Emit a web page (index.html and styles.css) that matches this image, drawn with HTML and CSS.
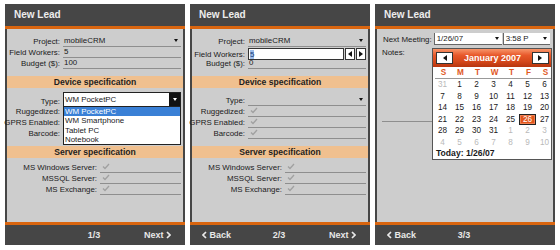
FILE: index.html
```html
<!DOCTYPE html>
<html lang="en">
<head>
  <meta charset="UTF-8">
  <title>New Lead</title>
  <link rel="stylesheet" href="styles.css">
</head>
<body>
  <div class="screens">

    <!-- Paso 1: tipo de dispositivo abierto -->
    <div class="phone">
      <div class="title">New Lead</div>
      <div class="body">
        <div class="row tall"><span class="lbl">Project:</span><span class="val">mobileCRM<i class="drop"></i></span></div>
        <div class="row"><span class="lbl">Field Workers:</span><span class="val">5</span></div>
        <div class="row"><span class="lbl">Budget ($):</span><span class="val">100</span></div>
        <div class="section">Device specification</div>
        <div class="row tall"><span class="lbl">Type:</span>
          <span class="val box">WM PocketPC<b class="btn"><i class="drop white"></i></b>
            <span class="list">
              <span class="item on">WM PocketPC</span>
              <span class="item">WM Smartphone</span>
              <span class="item">Tablet PC</span>
              <span class="item">Notebook</span>
            </span>
          </span>
        </div>
        <div class="row"><span class="lbl">Ruggedized:</span><span class="val"></span></div>
        <div class="row"><span class="lbl">GPRS Enabled:</span><span class="val"></span></div>
        <div class="row"><span class="lbl">Barcode:</span><span class="val"></span></div>
        <div class="section">Server specification</div>
        <div class="row wide"><span class="lbl">MS Windows Server:</span><span class="val"><svg class="check" viewBox="0 0 8 7"><polyline points="1,3.5 3,5.5 7,1"/></svg></span></div>
        <div class="row wide"><span class="lbl">MSSQL Server:</span><span class="val"><svg class="check" viewBox="0 0 8 7"><polyline points="1,3.5 3,5.5 7,1"/></svg></span></div>
        <div class="row wide"><span class="lbl">MS Exchange:</span><span class="val"><svg class="check" viewBox="0 0 8 7"><polyline points="1,3.5 3,5.5 7,1"/></svg></span></div>
      </div>
      <div class="foot">
        <span></span>
        <span class="page">1/3</span>
        <span class="next">Next <svg class="chev" viewBox="0 0 5 8"><polyline points="1,1 4,4 1,7"/></svg></span>
      </div>
    </div>

    <!-- Paso 2: editando trabajadores -->
    <div class="phone">
      <div class="title">New Lead</div>
      <div class="body">
        <div class="row tall"><span class="lbl">Project:</span><span class="val">mobileCRM<i class="drop"></i></span></div>
        <div class="row"><span class="lbl">Field Workers:</span>
          <span class="val edit"><span class="input"><span class="sel">5</span></span><b class="spin"><i class="tri left"></i></b><b class="spin"><i class="tri right"></i></b></span>
        </div>
        <div class="row"><span class="lbl">Budget ($):</span><span class="val">0</span></div>
        <div class="section">Device specification</div>
        <div class="row tall"><span class="lbl">Type:</span><span class="val"><i class="drop"></i></span></div>
        <div class="row"><span class="lbl">Ruggedized:</span><span class="val"><svg class="check" viewBox="0 0 8 7"><polyline points="1,3.5 3,5.5 7,1"/></svg></span></div>
        <div class="row"><span class="lbl">GPRS Enabled:</span><span class="val"><svg class="check" viewBox="0 0 8 7"><polyline points="1,3.5 3,5.5 7,1"/></svg></span></div>
        <div class="row"><span class="lbl">Barcode:</span><span class="val"><svg class="check" viewBox="0 0 8 7"><polyline points="1,3.5 3,5.5 7,1"/></svg></span></div>
        <div class="section">Server specification</div>
        <div class="row wide"><span class="lbl">MS Windows Server:</span><span class="val"><svg class="check" viewBox="0 0 8 7"><polyline points="1,3.5 3,5.5 7,1"/></svg></span></div>
        <div class="row wide"><span class="lbl">MSSQL Server:</span><span class="val"><svg class="check" viewBox="0 0 8 7"><polyline points="1,3.5 3,5.5 7,1"/></svg></span></div>
        <div class="row wide"><span class="lbl">MS Exchange:</span><span class="val"><svg class="check" viewBox="0 0 8 7"><polyline points="1,3.5 3,5.5 7,1"/></svg></span></div>
      </div>
      <div class="foot">
        <span class="back"><svg class="chev" viewBox="0 0 5 8"><polyline points="4,1 1,4 4,7"/></svg> Back</span>
        <span class="page">2/3</span>
        <span class="next">Next <svg class="chev" viewBox="0 0 5 8"><polyline points="1,1 4,4 1,7"/></svg></span>
      </div>
    </div>

    <!-- Paso 3: fecha de la reunion -->
    <div class="phone">
      <div class="title">New Lead</div>
      <div class="body">
        <div class="meet">
          <span class="mlbl">Next Meeting:</span>
          <span class="pick date">1/26/07<i class="drop"></i></span>
          <span class="pick time">3:58 P<i class="drop"></i></span>
        </div>
        <div class="notes-lbl">Notes:</div>
        <div class="notes"></div>

        <div class="cal">
          <div class="cal-head">
            <b class="nav"><i class="tri left"></i></b>
            <span class="month">January 2007</span>
            <b class="nav"><i class="tri right"></i></b>
          </div>
          <div class="cal-grid names">
            <span>S</span><span>M</span><span>T</span><span>W</span><span>T</span><span>F</span><span>S</span>
          </div>
          <div class="cal-grid days" id="days"></div>
          <div class="today">Today: 1/26/07</div>
        </div>
      </div>
      <div class="foot">
        <span class="back"><svg class="chev" viewBox="0 0 5 8"><polyline points="4,1 1,4 4,7"/></svg> Back</span>
        <span class="page">3/3</span>
        <span></span>
      </div>
    </div>

  </div>

  <script>
    // Dias del calendario: 31 de diciembre + enero + primeros de febrero
    const dias = document.getElementById("days");
    const lista = [{ n: 31, fuera: true }];
    for (let d = 1; d <= 31; d++) lista.push({ n: d });
    for (let d = 1; lista.length < 42; d++) lista.push({ n: d, fuera: true });

    lista.forEach(dia => {
      const span = document.createElement("span");
      span.textContent = dia.n;
      if (dia.fuera) span.className = "out";
      if (!dia.fuera && dia.n === 26) span.className = "hoy";
      dias.appendChild(span);
    });
  </script>
</body>
</html>
```

FILE: styles.css
```css
body {
  margin: 0;
  background: #fff;
  font-family: "Liberation Sans", Arial, sans-serif;
  color: #1a1a1a;
}
.screens {
  display: flex;
  gap: 5px;
  padding: 4px 5px 0;
}
.phone {
  width: 180px;
  height: 241px;
  background: #464646;
  display: flex;
  flex-direction: column;
}
.title {
  height: 22px;
  line-height: 22px;
  padding-left: 9px;
  color: #ededed;
  font-weight: bold;
  font-size: 10px;
  border-bottom: 3px solid #d9650f;
}
.body {
  flex: 1;
  margin: 0 2px;
  padding-top: 4px;
  background: #cdcdcd;
  position: relative;
}
.foot {
  height: 20px;
  border-top: 3px solid #d9650f;
  display: grid;
  grid-template-columns: 1fr auto 1fr;
  align-items: center;
  padding: 0 14px 0 12px;
  color: #e8e8e8;
  font-weight: bold;
  font-size: 9px;
}
.next {
  justify-self: end;
}
.chev {
  width: 5px;
  height: 8px;
  fill: none;
  stroke: #e8e8e8;
  stroke-width: 1.7;
  vertical-align: -1px;
}

/* filas de formulario */
.row {
  display: grid;
  grid-template-columns: 53px 1fr;
  column-gap: 3px;
  height: 11px;
  margin-right: 2px;
  font-size: 7.9px;
}
.row.tall {
  height: 14px;
}
.row.wide {
  grid-template-columns: 90px 1fr;
}
.lbl {
  display: flex;
  justify-content: flex-end;
  align-items: flex-end;
  white-space: nowrap;
  line-height: 10px;
}
.val {
  position: relative;
  display: flex;
  align-items: flex-end;
  line-height: 10px;
  padding-left: 1px;
  border-bottom: 1px solid #8e8e8e;
}
.section {
  height: 12px;
  line-height: 12px;
  margin: 7px 0 4px;
  background: #f0c08f;
  text-align: center;
  font-weight: bold;
  font-size: 8.6px;
  color: #1e1e1e;
}
.drop {
  position: absolute;
  right: 3px;
  bottom: 4px;
  border-left: 2.5px solid transparent;
  border-right: 2.5px solid transparent;
  border-top: 3px solid #111;
}
.drop.white {
  border-top-color: #fff;
  right: 3px;
  bottom: 5px;
}
.check {
  width: 8px;
  height: 7px;
  margin: 0 0 2px 1px;
  fill: none;
  stroke: #a0a0a0;
  stroke-width: 1.3;
}

/* desplegable abierto */
.val.box {
  height: 15px;
  background: #fff;
  border: 1px solid #222;
  box-sizing: border-box;
  align-items: center;
  padding-left: 1px;
}
.btn {
  position: absolute;
  top: 0;
  right: 0;
  bottom: 0;
  width: 11px;
  background: #111;
}
.list {
  position: absolute;
  top: 13px;
  left: -1px;
  right: -1px;
  background: #fff;
  border: 1px solid #222;
  z-index: 2;
}
.item {
  display: block;
  height: 9.3px;
  line-height: 9px;
  padding-left: 1px;
}
.item.on {
  background: #3a80d6;
  color: #fff;
}

/* campo numerico con flechas */
.val.edit {
  border: none;
  padding: 0;
  margin-top: 1px;
  height: 12px;
  align-items: stretch;
}
.input {
  flex: 1;
  background: #fff;
  border: 1px solid #333;
  display: flex;
  align-items: center;
  padding-left: 1px;
}
.sel {
  background: #9dbde9;
  color: #1a3f80;
  line-height: 9px;
}
.spin {
  width: 8px;
  margin-left: 1px;
  background: #fff;
  border: 1px solid #333;
  display: flex;
  align-items: center;
  justify-content: center;
}
.tri {
  border-top: 3px solid transparent;
  border-bottom: 3px solid transparent;
}
.tri.left {
  border-right: 4px solid #111;
}
.tri.right {
  border-left: 4px solid #111;
}

/* pantalla de reunion */
.meet {
  display: flex;
  align-items: center;
  height: 12px;
  padding-left: 6px;
  font-size: 7.9px;
}
.mlbl {
  margin-right: 2px;
}
.pick {
  position: relative;
  height: 12px;
  line-height: 12px;
  background: #fff;
  border-left: 1px solid #666;
  border-bottom: 1px solid #666;
  box-sizing: border-box;
  padding-left: 2px;
  overflow: hidden;
}
.pick .drop {
  bottom: 4px;
}
.date {
  width: 68px;
}
.time {
  width: 47px;
  margin-left: 1px;
}
.notes-lbl {
  margin: 3px 0 0 5px;
  line-height: 10px;
  font-size: 7.9px;
}
.notes {
  height: 63px;
  margin: 0 2px 0 5px;
  border-bottom: 1px solid #8e8e8e;
}

/* calendario */
.cal {
  position: absolute;
  left: 55px;
  top: 19px;
  width: 120px;
  background: #fff;
  border: 1px solid #555;
  box-sizing: border-box;
  font-size: 8.2px;
  z-index: 2;
}
.cal-head {
  height: 18px;
  display: flex;
  align-items: center;
  justify-content: space-between;
  padding: 0 2px 0 3px;
  background: linear-gradient(#f7956a, #e8582a 35%, #d4481a 70%, #b7350e);
}
.nav {
  width: 15px;
  height: 10px;
  background: #fff;
  border: 1px solid #333;
  display: flex;
  align-items: center;
  justify-content: center;
}
.month {
  color: #fff;
  font-weight: bold;
  font-size: 9px;
}
.cal-grid {
  display: grid;
  grid-template-columns: repeat(7, 17px);
  padding: 0 1px;
  text-align: center;
}
.names {
  height: 11px;
  line-height: 11px;
  color: #e0581e;
  font-weight: bold;
  margin: 0 0 0 2px;
  border-bottom: 1px solid #999;
  padding-left: 0;
}
.days {
  grid-auto-rows: 11.5px;
  line-height: 11.5px;
}
.days .out {
  color: #b9b9b9;
}
.days .hoy {
  margin: 0.5px 0;
  line-height: 9px;
  background: #e2551c;
  color: #fff;
  border: 1px solid #222;
  box-shadow: inset 0 0 0 1px #f08050;
}
.today {
  height: 11px;
  line-height: 11px;
  padding-left: 3px;
  font-weight: bold;
  font-size: 8.6px;
}
```
